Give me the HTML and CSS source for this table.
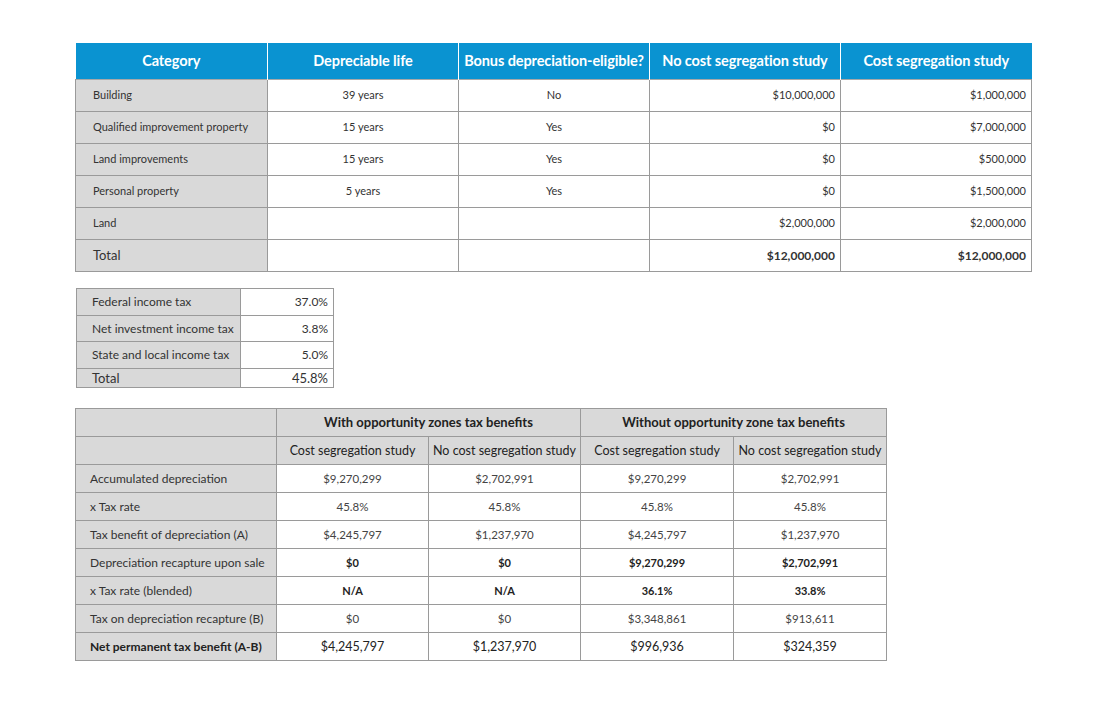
FILE: index.html
```html
<!DOCTYPE html>
<html>
<head>
<meta charset="utf-8">
<link rel="stylesheet" href="styles.css">
</head>
<body>
<div class="page">
  <table class="t1">
    <colgroup><col class="c192"><col class="c191"><col class="c191"><col class="c191"><col class="c191"></colgroup>
    <thead>
      <tr><th>Category</th><th>Depreciable life</th><th>Bonus depreciation-eligible?</th><th>No cost segregation study</th><th>Cost segregation study</th></tr>
    </thead>
    <tbody>
      <tr><td class="lab">Building</td><td class="ctr">39 years</td><td class="ctr">No</td><td class="num">$10,000,000</td><td class="num">$1,000,000</td></tr>
      <tr><td class="lab">Qualified improvement property</td><td class="ctr">15 years</td><td class="ctr">Yes</td><td class="num">$0</td><td class="num">$7,000,000</td></tr>
      <tr><td class="lab">Land improvements</td><td class="ctr">15 years</td><td class="ctr">Yes</td><td class="num">$0</td><td class="num">$500,000</td></tr>
      <tr><td class="lab">Personal property</td><td class="ctr">5 years</td><td class="ctr">Yes</td><td class="num">$0</td><td class="num">$1,500,000</td></tr>
      <tr><td class="lab">Land</td><td></td><td></td><td class="num">$2,000,000</td><td class="num">$2,000,000</td></tr>
      <tr class="total"><td class="lab">Total</td><td></td><td></td><td class="num b">$12,000,000</td><td class="num b">$12,000,000</td></tr>
    </tbody>
  </table>

  <table class="t2">
    <colgroup><col class="c164"><col class="c93"></colgroup>
    <tbody>
      <tr class="r27"><td class="lab">Federal income tax</td><td class="num">37.0%</td></tr>
      <tr class="r26"><td class="lab">Net investment income tax</td><td class="num">3.8%</td></tr>
      <tr class="r27"><td class="lab">State and local income tax</td><td class="num">5.0%</td></tr>
      <tr class="total"><td class="lab">Total</td><td class="num">45.8%</td></tr>
    </tbody>
  </table>

  <table class="t3">
    <colgroup><col class="c201"><col class="c152"><col class="c152"><col class="c153"><col class="c153"></colgroup>
    <thead>
      <tr><th></th><th colspan="2" class="grp">With opportunity zones tax benefits</th><th colspan="2" class="grp">Without opportunity zone tax benefits</th></tr>
      <tr><th></th><th>Cost segregation study</th><th>No cost segregation study</th><th>Cost segregation study</th><th>No cost segregation study</th></tr>
    </thead>
    <tbody>
      <tr><td class="lab">Accumulated depreciation</td><td>$9,270,299</td><td>$2,702,991</td><td>$9,270,299</td><td>$2,702,991</td></tr>
      <tr><td class="lab">x Tax rate</td><td>45.8%</td><td>45.8%</td><td>45.8%</td><td>45.8%</td></tr>
      <tr><td class="lab">Tax benefit of depreciation (A)</td><td>$4,245,797</td><td>$1,237,970</td><td>$4,245,797</td><td>$1,237,970</td></tr>
      <tr class="semi"><td class="lab">Depreciation recapture upon sale</td><td>$0</td><td>$0</td><td>$9,270,299</td><td>$2,702,991</td></tr>
      <tr class="semi"><td class="lab">x Tax rate (blended)</td><td>N/A</td><td>N/A</td><td>36.1%</td><td>33.8%</td></tr>
      <tr><td class="lab">Tax on depreciation recapture (B)</td><td>$0</td><td>$0</td><td>$3,348,861</td><td>$913,611</td></tr>
      <tr class="net"><td class="lab">Net permanent tax benefit (A-B)</td><td>$4,245,797</td><td>$1,237,970</td><td>$996,936</td><td>$324,359</td></tr>
    </tbody>
  </table>
</div>
</body>
</html>
```

FILE: styles.css
```css
html, body {
  margin: 0;
  padding: 0;
  background: #ffffff;
}
.page {
  padding: 43px 0 0 75px;
  font-family: Lato, "Liberation Sans", sans-serif;
  color: #333333;
}
table {
  border-collapse: collapse;
  table-layout: fixed;
}
td, th {
  padding: 0;
  box-sizing: border-box;
  overflow: hidden;
  white-space: nowrap;
}
.c192 { width: 192px; }
.c191 { width: 191px; }
.c164 { width: 164px; }
.c93 { width: 93px; }
.c201 { width: 201px; }
.c152 { width: 152px; }
.c153 { width: 153px; }

/* Table 1 */
.t1 {
  width: 956px;
}
.t1 th {
  background: #0a93d1;
  color: #ffffff;
  font-weight: 700;
  font-size: 14.5px;
  letter-spacing: -0.1px;
  height: 36px;
  text-align: center;
  border-left: 1px solid #ffffff;
  border-right: 1px solid #ffffff;
}
.t1 th:first-child { border-left: none; }
.t1 th:last-child { border-right: none; }
.t1 td {
  height: 32px;
  font-size: 11px;
  border: 1px solid #9a9a9a;
  border-top-color: #a8a8a8;
  vertical-align: middle;
  padding-bottom: 2px;
}
.t1 .lab {
  background: #d9d9d9;
  padding-left: 17px;
}
.t1 .ctr { text-align: center; }
.t1 .num { text-align: right; padding-right: 5px; }
.t1 .total td { padding-bottom: 0; }
.t1 .total .lab { font-size: 13px; }
.t1 .b { font-weight: 700; font-size: 12px; }

/* Table 2 */
.t2 {
  width: 257px;
  margin: 16px 0 0 1px;
}
.t2 td {
  font-size: 12px;
  border: 1px solid #9a9a9a;
  vertical-align: middle;
}
.t2 .r27 td { height: 27px; }
.t2 .r26 td { height: 26px; }
.t2 .total td { height: 19px; font-size: 13px; }
.t2 .lab {
  background: #d9d9d9;
  padding-left: 15px;
}
.t2 .num {
  text-align: right;
  padding-right: 5px;
}

/* Table 3 */
.t3 {
  width: 811px;
  margin-top: 20px;
}
.t3 th, .t3 td {
  height: 28px;
  border: 1px solid #9a9a9a;
  vertical-align: middle;
}
.t3 th {
  background: #d9d9d9;
  color: #222222;
  font-size: 12.5px;
  font-weight: 400;
}
.t3 th.grp { font-weight: 700; font-size: 13px; }
.t3 td {
  text-align: center;
  font-size: 11.5px;
  color: #444444;
}
.t3 td.lab {
  text-align: left;
  background: #d9d9d9;
  padding-left: 14px;
  color: #333333;
  font-size: 12px;
}
.t3 .semi td { font-weight: 700; color: #222222; font-size: 11px; }
.t3 .semi td.lab { font-weight: 400; font-size: 12px; color: #333333; }
.t3 .net td { font-size: 12.5px; color: #222222; }
.t3 .net td.lab { font-weight: 700; font-size: 12px; }
```
